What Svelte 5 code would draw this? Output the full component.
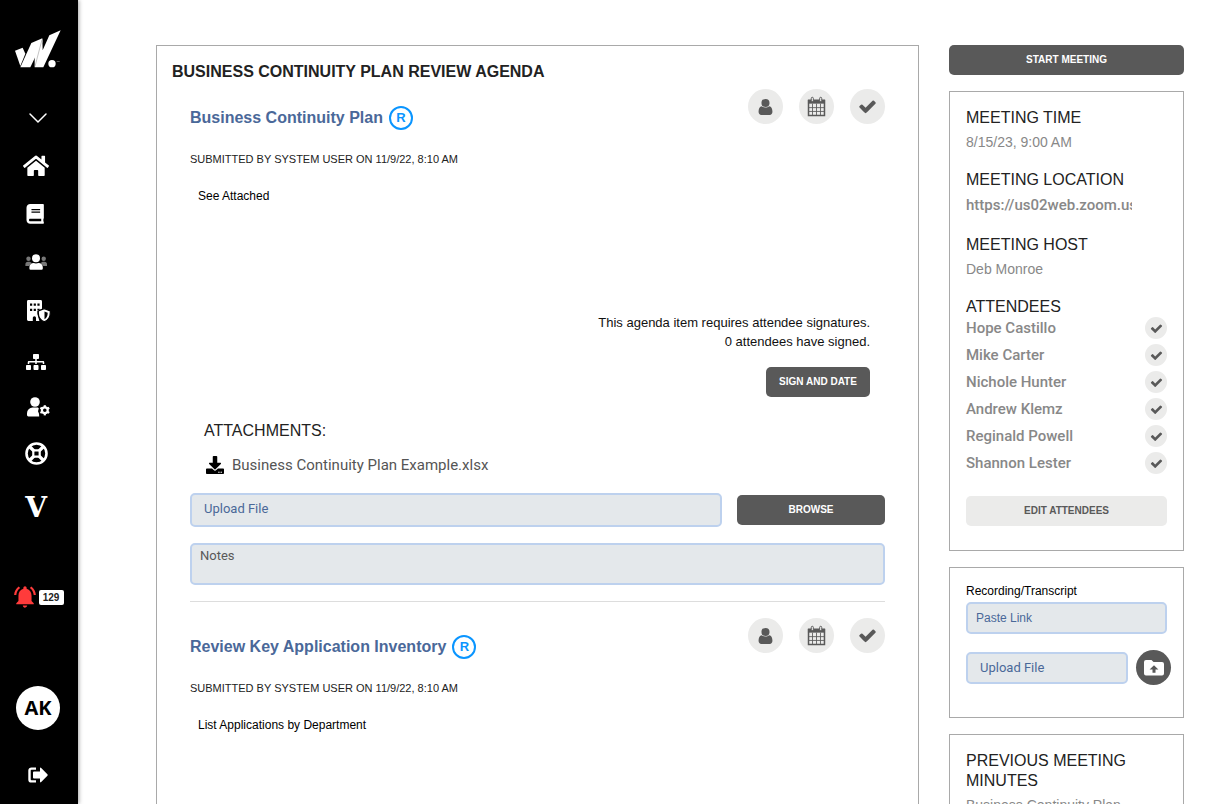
<script lang="ts">
    type Item = {
        title: string
        submitted: string
        body: string
        file: string
    }

    const items: Item[] = [
        {
            title: 'Business Continuity Plan',
            submitted: 'Submitted by System User on 11/9/22, 8:10 AM',
            body: 'See Attached',
            file: 'Business Continuity Plan Example.xlsx'
        },
        {
            title: 'Review Key Application Inventory',
            submitted: 'Submitted by System User on 11/9/22, 8:10 AM',
            body: 'List Applications by Department',
            file: ''
        }
    ]

    const attendees = ['Hope Castillo', 'Mike Carter', 'Nichole Hunter', 'Andrew Klemz', 'Reginald Powell', 'Shannon Lester']

    const teeth = [0, 60, 120, 180, 240, 300]
</script>

{#snippet check(size: number)}
    <svg width={size} height={size} viewBox="0 0 1792 1792" fill="currentColor" aria-hidden="true">
        <path d="M1671 566q0 40-28 68l-724 724-136 136q-28 28-68 28t-68-28l-136-136-362-362q-28-28-28-68t28-68l136-136q28-28 68-28t68 28l294 295 656-657q28-28 68-28t68 28l136 136q28 28 28 68z"/>
    </svg>
{/snippet}

<div class="app">
    <aside class="sidebar">
        <a class="logo" href="#home" aria-label="Dashboard">
            <svg width="46" height="38" viewBox="46 89 138 114" fill="#fff">
                <path d="M46 151 69 142 77 160 62 197Z"/>
                <path d="M62 201 95 128 128 114 128 126 92 201Z"/>
                <path d="M105 201 105 168 128 116 129 150 149 105 183 90 131 201Z"/>
                <path d="M127 118 106 198" stroke="#888" stroke-width="1.5"/>
                <circle cx="157" cy="190" r="11"/>
                <path d="M171 183h9v2h-9z" fill="#777"/>
            </svg>
        </a>
        <button class="collapse" aria-label="Toggle menu">
            <svg width="20" height="12" viewBox="0 0 20 12" fill="none" stroke="#fff" stroke-width="1.5" stroke-linecap="round"><path d="m2 2 8 8 8-8"/></svg>
        </button>
        <nav>
            <a href="#home" aria-label="Home">
                <svg viewBox="0 0 28 28">
                    <path transform="translate(1 2.2) scale(.0452)" d="M280.37 148.26L96 300.11V464a16 16 0 0 0 16 16l112.06-.29a16 16 0 0 0 15.92-16V368a16 16 0 0 1 16-16h64a16 16 0 0 1 16 16v95.64a16 16 0 0 0 16 16.05L464 480a16 16 0 0 0 16-16V300L295.67 148.26a12.19 12.19 0 0 0-15.3 0zM571.6 251.47L488 182.56V44.05a12 12 0 0 0-12-12h-56a12 12 0 0 0-12 12v72.61L318.47 43a48 48 0 0 0-61 0L4.34 251.47a12 12 0 0 0-1.6 16.9l25.5 31A12 12 0 0 0 45.15 301l235.22-193.74a12.19 12.19 0 0 1 15.3 0L530.9 301a12 12 0 0 0 16.9-1.6l25.5-31a12 12 0 0 0-1.7-16.93z"/>
                </svg>
            </a>
            <a href="#policies" aria-label="Policies">
                <svg viewBox="0 0 28 28">
                    <path transform="translate(4.5 4) scale(.0387)" d="M448 360V24c0-13.3-10.7-24-24-24H96C43 0 0 43 0 96v320c0 53 43 96 96 96h328c13.3 0 24-10.7 24-24v-16c0-7.5-3.5-14.3-8.9-18.7-4.2-15.4-4.2-59.3 0-74.7 5.4-4.3 8.9-11.1 8.9-18.6zM128 134c0-3.3 2.7-6 6-6h212c3.3 0 6 2.7 6 6v20c0 3.3-2.7 6-6 6H134c-3.3 0-6-2.7-6-6v-20zm0 64c0-3.3 2.7-6 6-6h212c3.3 0 6 2.7 6 6v20c0 3.3-2.7 6-6 6H134c-3.3 0-6-2.7-6-6v-20zm253.4 250H96c-17.7 0-32-14.3-32-32 0-17.6 14.4-32 32-32h285.4c-1.9 17.1-1.9 46.9 0 64z"/>
                </svg>
            </a>
            <a href="#committees" aria-label="Committees">
                <svg viewBox="0 0 28 28">
                    <g fill="#777">
                        <circle cx="6.5" cy="10.7" r="2.2"/>
                        <circle cx="21.7" cy="10.7" r="2.2"/>
                        <path d="M3.4 18v-1.6a2.6 2.6 0 0 1 2.6-2.6h1.8l2 1.2L7 18zM25 18v-1.6a2.6 2.6 0 0 0-2.6-2.6h-1.8l-2 1.2 2.8 3z"/>
                    </g>
                    <circle cx="14" cy="10.2" r="4"/>
                    <path d="M7.4 20.6v-1.4a4.2 4.2 0 0 1 4.2-4.2l2.4.6 2.6-.6a4.2 4.2 0 0 1 4.2 4.2v1.4a1.2 1.2 0 0 1-1.2 1.2h-11a1.2 1.2 0 0 1-1.2-1.2z"/>
                </svg>
            </a>
            <a href="#vendors" aria-label="Vendors">
                <svg viewBox="0 0 28 28">
                    <path fill-rule="evenodd" d="M6.4 4h12.2a1.4 1.4 0 0 1 1.4 1.4v7.4l-4.6 1.8v3.4l2 7H14v-3.2a1.6 1.6 0 0 0-3.2 0V25H6.4A1.4 1.4 0 0 1 5 23.6V5.4A1.4 1.4 0 0 1 6.4 4zM8 7.5v2.3h2.2V7.5zM11.7 7.5v2.3h2.2V7.5zM15.4 7.5v2.3h2.2V7.5zM8 12.7V15h2.2v-2.3zM11.7 12.7V15h2.2v-2.3zM15.4 12.7V15h2.2v-2.3z"/>
                    <path d="m22.3 12.6 6 2.3v1.8c0 4.2-2 7.5-6 9.1-4-1.6-6-4.900-6-9.100v-1.800z" stroke="#000" stroke-width="1.2"/>
                    <path d="M22.5 15.500v7.800c2-1.300 3.200-3.300 3.200-6.600z" fill="#000"/>
                </svg>
            </a>
            <a href="#organization" aria-label="Organization">
                <svg viewBox="0 0 28 28">
                    <path transform="translate(4 10) scale(.03125)" d="M128 352H32c-17.67 0-32 14.33-32 32v96c0 17.67 14.33 32 32 32h96c17.67 0 32-14.33 32-32v-96c0-17.67-14.33-32-32-32zm-24-80h192v48h48v-48h192v48h48v-57.59c0-21.17-17.23-38.41-38.41-38.41H344v-64h40c17.67 0 32-14.33 32-32V32c0-17.67-14.33-32-32-32H256c-17.67 0-32 14.33-32 32v96c0 17.67 14.33 32 32 32h40v64H94.410C73.230 224 56 241.230 56 262.410V320h48v-48zm264 80h-96c-17.670 0-32 14.330-32 32v96c0 17.670 14.330 32 32 32h96c17.670 0 32-14.330 32-32v-96c0-17.670-14.330-32-32-32zm240 0h-96c-17.670 0-32 14.330-32 32v96c0 17.670 14.330 32 32 32h96c17.670 0 32-14.330 32-32v-96c0-17.670-14.330-32-32-32z"/>
                </svg>
            </a>
            <a href="#users" aria-label="User settings">
                <svg viewBox="0 0 28 28">
                    <circle cx="13" cy="10" r="4.8"/>
                    <path d="M5 23v-1.800A5.600 5.600 0 0 1 10.600 15.600h5.200l1 .6-.8 3 1 2.600.2 2.600H6.400A1.400 1.400 0 0 1 5 23z"/>
                    <g stroke="#fff" stroke-width="2.2">
                        {#each teeth as angle}
                            <path transform="rotate({angle} 22.8 18.3)" d="M22.8 13.2v2"/>
                        {/each}
                    </g>
                    <circle cx="22.8" cy="18.3" r="2.9" fill="none" stroke="#fff" stroke-width="2.2"/>
                </svg>
            </a>
            <a href="#support" aria-label="Support">
                <svg viewBox="0 0 28 28">
                    <g fill="none" stroke="#fff">
                        <circle cx="14.5" cy="13.5" r="10" stroke-width="2.6"/>
                        <rect x="11.3" y="10.3" width="6.4" height="6.4" rx="1.5" stroke-width="2.2"/>
                        <path d="m7.7 6.7 4.2 4.2m5.2 5.2 4.2 4.2m0-13.6-4.2 4.2m-5.2 5.2-4.2 4.2" stroke-width="3.4"/>
                    </g>
                </svg>
            </a>
            <a class="letter" href="#vault" aria-label="Vault">V</a>
        </nav>
        <button class="alerts" aria-label="129 notifications">
            <svg width="24" height="24" viewBox="1 1.5 22 21.5" fill="#ff3b3b">
                <path d="M7.58 4.08L6.15 2.65C3.75 4.48 2.17 7.3 2.03 10.5h2c.15-2.65 1.51-4.97 3.55-6.42zm12.39 6.42h2c-.15-3.2-1.73-6.02-4.12-7.85l-1.42 1.43c2.02 1.45 3.39 3.77 3.54 6.42zM18 11c0-3.07-1.64-5.64-4.5-6.32V4c0-.83-.67-1.5-1.5-1.5s-1.5.67-1.5 1.5v.68C7.63 5.36 6 7.92 6 11v5l-2 2v1h16v-1l-2-2v-5zm-6 11c.14 0 .27-.01.4-.04.65-.14 1.18-.58 1.44-1.18.1-.24.15-.5.15-.78h-4c.01 1.1.9 2 2.01 2z"/>
            </svg>
            <span class="count">129</span>
        </button>
        <button class="avatar">AK</button>
        <button class="logout" aria-label="Log out">
            <svg width="22" height="18" viewBox="0 0 22 18" fill="none">
                <path d="M9 2.6H4.5a2 2 0 0 0-2 2v8.800a2 2 0 0 0 2 2H9" stroke="#fff" stroke-width="2.4"/>
                <path d="M7 5.600h6V2.400q0-1.400 1.200-.4l6.200 6.200q.8.800 0 1.600l-6.200 6.200q-1.200 1-1.200-.4v-3.200H7q-1 0-1-1V6.600q0-1 1-1z" fill="#fff"/>
            </svg>
        </button>
    </aside>

    <main>
        <section class="agenda">
            <h1>BUSINESS CONTINUITY PLAN REVIEW AGENDA</h1>
            {#each items as item, i}
                <article class="item">
                    <header>
                        <h2>{item.title} <span class="required">R</span></h2>
                        <div class="actions">
                            <button class="round" aria-label="Assign">
                                <svg width="15" height="18" viewBox="0 0 16 19" fill="currentColor"><circle cx="8" cy="5.2" r="4.3"/><path d="M4 8.600c2.200 2 5.800 2 8 0 2.300.3 3.400 2.600 3.400 6 0 2.200-1.200 3.400-3 3.400H3.600c-1.800 0-3-1.200-3-3.400 0-3.400 1.100-5.700 3.400-6z"/></svg>
                            </button>
                            <button class="round" aria-label="Schedule">
                                <svg width="19" height="21" viewBox="0 0 20 22" fill="none" stroke="currentColor">
                                    <path d="M1.6 4.6h16.8v15.8H1.6z" stroke-width="1.6"/>
                                    <path d="M1 3.8h18V8H1z" fill="currentColor" stroke="none"/>
                                    <path d="M5.8 8v12M10 8v12M14.2 8v12M2 12.2h16M2 16.2h16" stroke-width=".9"/>
                                    <rect x="4.5" y="1.3" width="2.2" height="4.6" rx="1.1" fill="#ebebea"/>
                                    <rect x="13.3" y="1.3" width="2.2" height="4.6" rx="1.1" fill="#ebebea"/>
                                </svg>
                            </button>
                            <button class="round" aria-label="Complete">{@render check(19)}</button>
                        </div>
                    </header>
                    <p class="submitted">{item.submitted}</p>
                    <p class="body">{item.body}</p>
                    {#if item.file}
                        <div class="signatures">
                            <p>This agenda item requires attendee signatures.</p>
                            <p>0 attendees have signed.</p>
                            <button class="btn">SIGN AND DATE</button>
                        </div>
                        <h3>ATTACHMENTS:</h3>
                        <a class="file" href="#attachment">
                            <svg width="18" height="18" viewBox="0 0 512 512" fill="#000"><path d="M216 0h80c13.3 0 24 10.7 24 24v168h87.7c17.8 0 26.7 21.5 14.1 34.1L269.7 378.3c-7.5 7.5-19.8 7.5-27.3 0L90.1 226.1c-12.6-12.6-3.7-34.1 14.1-34.1H192V24c0-13.3 10.7-24 24-24zm296 376v112c0 13.3-10.7 24-24 24H24c-13.3 0-24-10.7-24-24V376c0-13.3 10.7-24 24-24h146.7l49 49c20.1 20.1 52.5 20.1 72.6 0l49-49H488c13.3 0 24 10.7 24 24zm-124 88c0-11-9-20-20-20s-20 9-20 20 9 20 20 20 20-9 20-20zm64 0c0-11-9-20-20-20s-20 9-20 20 9 20 20 20 20-9 20-20z"/></svg>
                            {item.file}
                        </a>
                        <div class="upload">
                            <input class="field" type="text" placeholder="Upload File" aria-label="Upload File" />
                            <button class="btn">BROWSE</button>
                        </div>
                        <textarea class="field notes" placeholder="Notes" aria-label="Notes"></textarea>
                    {/if}
                </article>
                {#if i < items.length - 1}
                    <hr />
                {/if}
            {/each}
        </section>

        <div class="side">
            <button class="btn">START MEETING</button>

            <section class="card details">
                <h3>MEETING TIME</h3>
                <p class="value">8/15/23, 9:00 AM</p>
                <h3>MEETING LOCATION</h3>
                <a class="value link" href="#zoom">https://us02web.zoom.us</a>
                <h3>MEETING HOST</h3>
                <p class="value">Deb Monroe</p>
                <h3>ATTENDEES</h3>
                <ul>
                    {#each attendees as name}
                        <li>{name} <span class="tick">{@render check(13)}</span></li>
                    {/each}
                </ul>
                <button class="btn light">EDIT ATTENDEES</button>
            </section>

            <section class="card recording">
                <label for="recording">Recording/Transcript</label>
                <input id="recording" class="field" type="text" placeholder="Paste Link" />
                <div class="upload-small">
                    <input class="field" type="text" placeholder="Upload File" aria-label="Upload recording" />
                    <button class="round dark" aria-label="Upload">
                        <svg width="22" height="18" viewBox="0 0 22 18"><path fill="#fff" d="M3 1h5.500l2 2H19a2 2 0 0 1 2 2v9.500a2 2 0 0 1-2 2H3a2 2 0 0 1-2-2V3a2 2 0 0 1 2-2z"/><path fill="#595959" d="m11 6.200 4.400 4.400h-2.900v3.200h-3v-3.200H6.600z"/></svg>
                    </button>
                </div>
            </section>

            <section class="card">
                <h3>PREVIOUS MEETING MINUTES</h3>
                <p class="value">Business Continuity Plan</p>
            </section>
        </div>
    </main>
</div>

<style>
    :global(body) {
        background: #fff;
    }

    .app {
        display: flex;
        height: 100vh;
        font-family: "Liberation Sans", Arial, sans-serif;
        color: #222;
    }

    h1, h2, h3, p, ul {
        margin: 0;
        padding: 0;
    }

    button {
        border: 0;
        padding: 0;
        background: none;
        font-family: inherit;
        cursor: pointer;
    }

    a {
        color: inherit;
        text-decoration: none;
    }

    svg {
        display: block;
        flex: none;
    }

    .sidebar {
        flex: none;
        box-sizing: border-box;
        width: 78px;
        padding: 30px 2px 17px 0;
        display: flex;
        flex-direction: column;
        align-items: center;
        background: #000;
        color: #fff;
        box-shadow: 1px 0 4px rgba(0, 0, 0, 0.35);
    }

    .collapse {
        height: 24px;
        margin: 38px 0 12px;
        display: flex;
        align-items: center;
    }

    nav {
        align-self: stretch;
        margin-right: 4px;
    }

    nav a {
        height: 48px;
        display: flex;
        align-items: center;
        justify-content: center;
    }

    nav svg {
        width: 28px;
        height: 28px;
        fill: #fff;
        overflow: visible;
    }

    nav .letter {
        height: 60px;
        font: bold 28px/28px "DejaVu Serif", serif;
    }

    .alerts {
        margin-top: 47px;
        display: flex;
        align-items: center;
        gap: 2px;
    }

    .count {
        width: 25px;
        border-radius: 2px;
        background: #fff;
        color: #222;
        font-size: 10px;
        font-weight: bold;
        line-height: 15px;
    }

    .avatar {
        width: 44px;
        height: 44px;
        margin: auto 0 33px;
        border-radius: 50%;
        background: #fff;
        color: #000;
        font: bold 20px/44px "Open Sans", sans-serif;
    }

    .logout {
        height: 24px;
        display: flex;
        align-items: center;
    }

    main {
        flex: 1;
        padding: 45px 36px 0 78px;
        display: flex;
        align-items: flex-start;
        gap: 30px;
        overflow-y: auto;
        scrollbar-width: none;
    }

    .agenda {
        flex: 1;
        min-height: 900px;
        border: 1px solid #a9a9a9;
        padding: 16px 33px 24px;
    }

    h1 {
        margin: 0 -18px 7px;
        font-size: 16px;
        line-height: 20px;
    }

    header {
        display: flex;
        justify-content: space-between;
    }

    h2 {
        padding-top: 16px;
        display: flex;
        align-items: center;
        gap: 6px;
        color: #4a6899;
        font-size: 16px;
        line-height: 26px;
    }

    .required {
        box-sizing: border-box;
        width: 24px;
        height: 24px;
        border: 2px solid #0a95ff;
        border-radius: 50%;
        color: #0a95ff;
        font-size: 13px;
        line-height: 20px;
        text-align: center;
    }

    .actions {
        display: flex;
        gap: 16px;
    }

    .round {
        flex: none;
        width: 35px;
        height: 35px;
        border-radius: 50%;
        display: flex;
        align-items: center;
        justify-content: center;
        background: #ebebea;
        color: #595959;
    }

    .round.dark {
        background: #595959;
    }

    .submitted {
        margin-top: 20px;
        font-size: 11px;
        line-height: 16px;
        text-transform: uppercase;
    }

    .body {
        margin-top: 20px;
        padding-left: 8px;
        min-height: 126px;
        color: #000;
        font-size: 12px;
        line-height: 18px;
    }

    .signatures {
        padding-right: 15px;
        color: #111;
        font-size: 13px;
        line-height: 19px;
        text-align: right;
    }

    .signatures .btn {
        width: 104px;
        margin: 16px 0 0 auto;
    }

    .btn {
        display: block;
        height: 30px;
        border-radius: 5px;
        background: #595959;
        color: #fff;
        font-size: 10px;
        font-weight: bold;
        line-height: 30px;
    }

    .btn.light {
        background: #ebebea;
        color: #595959;
    }

    h3 {
        font-size: 16px;
        font-weight: normal;
        line-height: 20px;
    }

    .item h3 {
        margin: 24px 0 14px 14px;
    }

    .file {
        margin-left: 16px;
        display: flex;
        align-items: center;
        gap: 8px;
        color: #555;
        font: 15px/20px Roboto, sans-serif;
    }

    .field {
        box-sizing: border-box;
        width: 100%;
        height: 32px;
        border: 2px solid #bdd1ee;
        border-radius: 5px;
        padding: 0 8px;
        background: #e4e8eb;
        color: #4a6899;
        font-family: inherit;
        font-size: 12px;
    }

    .field::placeholder {
        color: #4a6899;
        opacity: 1;
    }

    .upload {
        margin-top: 18px;
        display: flex;
        align-items: center;
        gap: 15px;
    }

    .upload .field {
        flex: 1;
        height: 34px;
        padding: 0 12px 4px;
        font-family: Roboto, sans-serif;
        font-size: 13px;
    }

    .upload .btn {
        width: 148px;
    }

    .notes {
        display: block;
        height: 42px;
        margin-top: 16px;
        padding: 3px 8px;
        resize: none;
        font: 13px/16px Roboto, sans-serif;
    }

    .notes::placeholder {
        color: #595959;
    }

    hr {
        margin: 16px 0;
        border: 0;
        border-top: 1px solid #ddd;
    }

    .side {
        flex: none;
        width: 235px;
        display: flex;
        flex-direction: column;
        gap: 16px;
        padding-bottom: 24px;
    }

    .card {
        border: 1px solid #a9a9a9;
        padding: 16px 16px 24px;
    }

    .value {
        display: block;
        margin: 4px 0 18px;
        color: #888;
        font-size: 14px;
        line-height: 20px;
    }

    .link {
        width: 166px;
        margin: 5px 0 20px;
        overflow: hidden;
        white-space: nowrap;
        font: 500 15px/20px Roboto, sans-serif;
    }

    ul {
        display: flex;
        flex-direction: column;
        gap: 5px;
        list-style: none;
    }

    li {
        display: flex;
        align-items: center;
        justify-content: space-between;
        color: #888;
        font: 500 15px/22px Roboto, sans-serif;
    }

    .tick {
        width: 22px;
        height: 22px;
        border-radius: 50%;
        display: flex;
        align-items: center;
        justify-content: center;
        background: #ebebea;
        color: #595959;
    }

    .details .btn {
        width: 100%;
        margin-top: 22px;
    }

    .recording {
        padding: 15px 16px 32px;
    }

    label {
        display: block;
        margin-bottom: 3px;
        color: #000;
        font-size: 12px;
        line-height: 16px;
    }

    .upload-small {
        margin: 16px -4px 0 0;
        display: flex;
        align-items: center;
        gap: 8px;
    }

    .upload-small .field {
        flex: 1;
        min-width: 0;
        padding: 0 12px;
        font-family: Roboto, sans-serif;
        font-size: 13px;
    }
</style>
